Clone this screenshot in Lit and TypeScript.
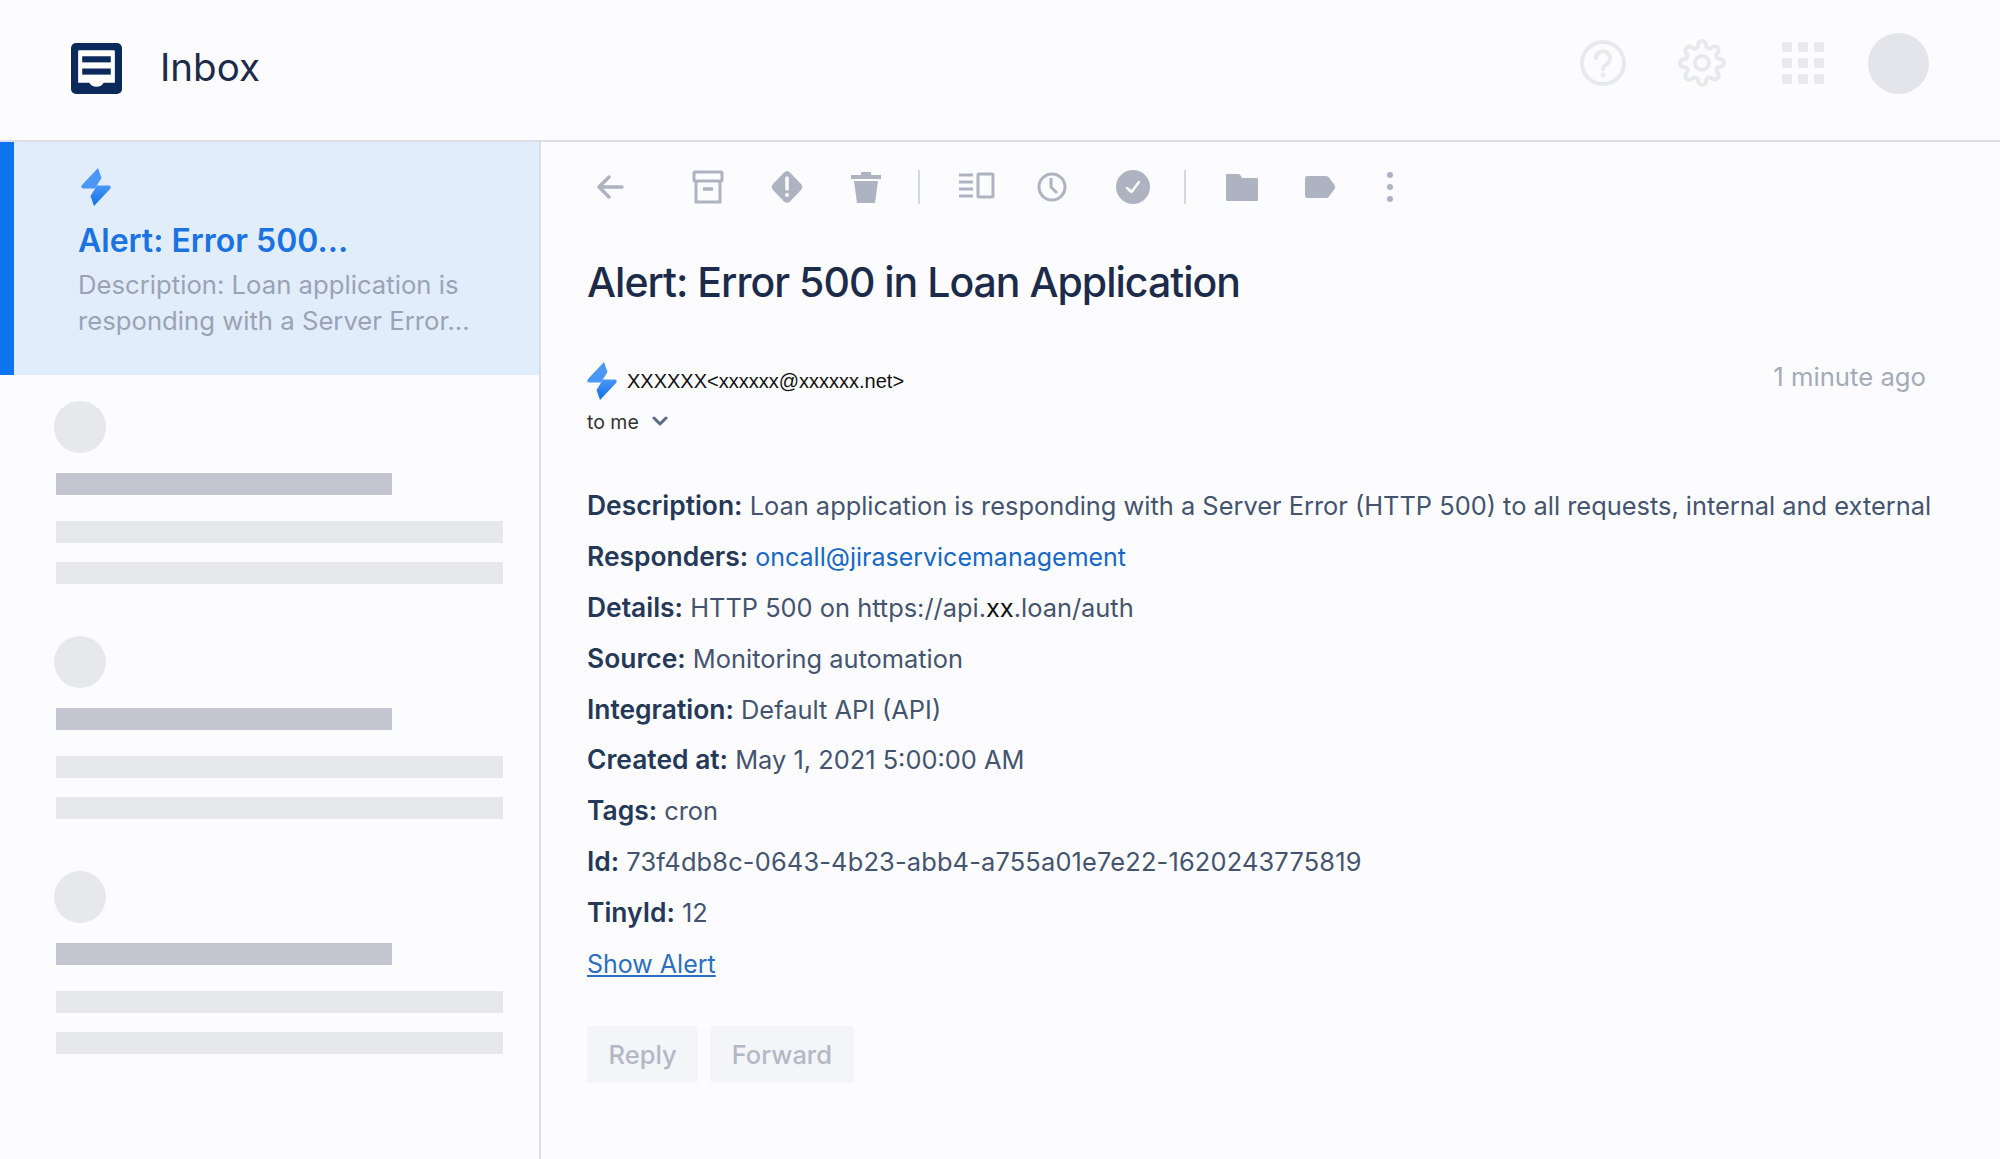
import { LitElement, css, html, svg } from 'lit'
import { customElement } from 'lit/decorators.js'

const bolt = (id: string) => svg`
  <defs>
    <linearGradient id=${id} x1="0" y1="0" x2="0" y2="1">
      <stop offset="0" stop-color="#4a97f5" />
      <stop offset="1" stop-color="#0f6fe6" />
    </linearGradient>
  </defs>
  <path fill="#4a97f5" d="M17 0 L1 17 Q-1 20.500 2.500 20.500 H14 L20.500 10 Z" />
  <path fill=${`url(#${id})`} d="M13 38 L29 21 Q31 17.500 27.500 17.500 H16 L9.500 28 Z" />
`

const skeletons = [0, 1, 2]

const details: [string, string][] = [
  ['Source:', 'Monitoring automation'],
  ['Integration:', 'Default API (API)'],
  ['Created at:', 'May 1, 2021 5:00:00 AM'],
  ['Tags:', 'cron'],
]

@customElement('app-root')
export class AppRoot extends LitElement {
  render() {
    return html`
      <div class="page">
        <header class="top">
          <svg class="logo" viewBox="0 0 50 50">
            <rect width="50" height="50" rx="5" fill="#0b2a5b" />
            <path fill="#fff" d="M7 8 a1 1 0 0 1 1-1 H42 a1 1 0 0 1 1 1 V39 H32 Q30 43 25 43 Q20 43 18 39 H7 Z" />
            <rect x="11" y="13" width="28" height="6" fill="#0b2a5b" />
            <rect x="11" y="25" width="28" height="6" fill="#0b2a5b" />
          </svg>
          <h1 class="inbox">Inbox</h1>
          <div class="top-right">
            <svg class="help" viewBox="0 0 46 46" fill="none" stroke="currentColor" stroke-width="4">
              <circle cx="23" cy="23" r="21" />
              <path stroke-linecap="round" d="M16 18 a7 7 0 1 1 11 6 q-4 2 -4 5" />
              <circle cx="23" cy="35" r="1.500" fill="currentColor" stroke-width="2" />
            </svg>
            <svg class="gear" viewBox="0 0 24 24" fill="none" stroke="currentColor" stroke-width="2">
              <circle cx="12" cy="12" r="3.500" />
              <path d="M19.400 15a1.650 1.650 0 0 0 .33 1.820l.06.06a2 2 0 0 1 0 2.830 2 2 0 0 1-2.830 0l-.06-.06a1.650 1.650 0 0 0-1.820-.33 1.650 1.650 0 0 0-1 1.510V21a2 2 0 0 1-2 2 2 2 0 0 1-2-2v-.09A1.650 1.650 0 0 0 9 19.400a1.650 1.650 0 0 0-1.820.33l-.06.06a2 2 0 0 1-2.830 0 2 2 0 0 1 0-2.830l.06-.06a1.650 1.650 0 0 0 .33-1.820 1.650 1.650 0 0 0-1.510-1H3a2 2 0 0 1-2-2 2 2 0 0 1 2-2h.09A1.650 1.650 0 0 0 4.600 9a1.650 1.650 0 0 0-.33-1.820l-.06-.06a2 2 0 0 1 0-2.830 2 2 0 0 1 2.830 0l.06.06a1.650 1.650 0 0 0 1.820.33H9a1.650 1.650 0 0 0 1-1.510V3a2 2 0 0 1 2-2 2 2 0 0 1 2 2v.09a1.650 1.650 0 0 0 1 1.510 1.650 1.650 0 0 0 1.820-.33l.06-.06a2 2 0 0 1 2.830 0 2 2 0 0 1 0 2.830l-.06.06a1.650 1.650 0 0 0-.33 1.820V9a1.650 1.650 0 0 0 1.510 1H21a2 2 0 0 1 2 2 2 2 0 0 1-2 2h-.09a1.650 1.650 0 0 0-1.510 1z" />
            </svg>
            <div class="apps">
              ${Array.from({ length: 9 }, () => html`<span></span>`)}
            </div>
            <div class="avatar"></div>
          </div>
        </header>

        <div class="main">
          <aside class="side">
            <div class="selected">
              <svg class="bolt" viewBox="0 0 30 38">${bolt('bolt-a')}</svg>
              <div class="sel-title">Alert: Error 500...</div>
              <div class="sel-desc">Description: Loan application is<br />responding with a Server Error...</div>
            </div>
            ${skeletons.map(
              () => html`
                <div class="skel">
                  <div class="skel-dot"></div>
                  <div class="skel-bar dark"></div>
                  <div class="skel-bar"></div>
                  <div class="skel-bar"></div>
                </div>
              `,
            )}
          </aside>

          <section class="mail">
            <div class="tools">
              <svg class="t back" viewBox="0 0 40 40" fill="none" stroke="currentColor" stroke-width="3.500" stroke-linecap="round" stroke-linejoin="round">
                <path d="M9 20 H32 M19 10 L9 20 L19 30" />
              </svg>
              <svg class="t archive" viewBox="0 0 40 40" fill="none" stroke="currentColor" stroke-width="3">
                <rect x="6" y="5" width="28" height="9" rx="1" />
                <path d="M8 14 V35 H32 V14" />
                <path d="M15 22 H25" stroke-width="3.500" />
              </svg>
              <svg class="t flag" viewBox="0 0 40 40">
                <path fill="currentColor" d="M20 4 Q21.500 4 23 5.500 L34 17 Q36.500 20 34 23 L23 34.500 Q20 37 17 34.500 L6 23 Q3.500 20 6 17 L17 5.500 Q18.500 4 20 4 Z" />
                <path stroke="#fcfcfe" stroke-width="3.500" stroke-linecap="round" d="M20 11 V22" />
                <circle cx="20" cy="28" r="2" fill="#fcfcfe" />
              </svg>
              <svg class="t trash" viewBox="0 0 40 40" fill="currentColor">
                <path d="M15 5 H25 V8 H35 V12 H5 V8 H15 Z" />
                <path d="M8 14 H32 L29 36 H11 Z" />
              </svg>
              <i class="sep s1"></i>
              <svg class="t panel" viewBox="0 0 40 40" fill="none" stroke="currentColor" stroke-width="3">
                <path d="M3 8 H17 M3 15 H17 M3 22 H17 M3 29 H17" />
                <rect x="22" y="7" width="15" height="23" rx="1" />
              </svg>
              <svg class="t clock" viewBox="0 0 40 40" fill="none" stroke="currentColor" stroke-width="3">
                <circle cx="20" cy="20" r="13" />
                <path d="M19 11 V20 L25 26" />
              </svg>
              <svg class="t check" viewBox="0 0 40 40">
                <circle cx="20" cy="20" r="17" fill="currentColor" />
                <path d="M14 21 L18.500 25 L26 15" fill="none" stroke="#fcfcfe" stroke-width="2.500" stroke-linecap="round" stroke-linejoin="round" />
              </svg>
              <i class="sep s2"></i>
              <svg class="t folder" viewBox="0 0 40 40" fill="currentColor">
                <path d="M4 7 H16 Q18 7 19 9 L20 11 H35 Q36 11 36 12 V33 Q36 34 35 34 H5 Q4 34 4 33 Z" />
              </svg>
              <svg class="t tag" viewBox="0 0 40 40" fill="currentColor">
                <path d="M7 9 H26 Q28 9 29 10.500 L34.500 18 Q36 20 34.500 22 L29 29.500 Q28 31 26 31 H7 Q5 31 5 28 V12 Q5 9 7 9 Z" />
              </svg>
              <svg class="t kebab" viewBox="0 0 40 40" fill="currentColor">
                <circle cx="20" cy="8" r="3" />
                <circle cx="20" cy="20" r="3" />
                <circle cx="20" cy="32" r="3" />
              </svg>
            </div>

            <h2 class="subject">Alert: Error 500 in Loan Application</h2>

            <div class="from">
              <div class="from-left">
                <div class="sender">
                  <svg class="bolt-sm" viewBox="0 0 30 38">${bolt('bolt-b')}</svg>
                  <span>XXXXXX&lt;xxxxxx@xxxxxx.net&gt;</span>
                </div>
                <div class="to">
                  to me
                  <svg class="chev" viewBox="0 0 16 10" fill="none" stroke="#5a6b85" stroke-width="3" stroke-linecap="round" stroke-linejoin="round">
                    <path d="M2 2 L8 8 L14 2" />
                  </svg>
                </div>
              </div>
              <div class="when">1 minute ago</div>
            </div>

            <div class="body">
              <p><b>Description:</b> Loan application is responding with a Server Error (HTTP 500) to all requests, internal and external</p>
              <p><b>Responders:</b> <a class="plain">oncall@jiraservicemanagement</a></p>
              <p><b>Details:</b> HTTP 500 on https://api.<span class="dark-x">xx</span>.loan/auth</p>
              ${details.map(([k, v]) => html`<p><b>${k}</b> ${v}</p>`)}
              <p><b>Id:</b> <span class="uuid">73f4db8c-0643-4b23-abb4-a755a01e7e22-1620243775819</span></p>
              <p><b>TinyId:</b> 12</p>
              <p><a class="under">Show Alert</a></p>
            </div>

            <div class="actions">
              <button>Reply</button>
              <button>Forward</button>
            </div>
          </section>
        </div>
      </div>
    `
  }

  static styles = css`
    :host {
      display: block;
      font-family: Inter, 'Liberation Sans', sans-serif;
    }
    .page {
      width: 2000px;
      height: 1159px;
      overflow: hidden;
      background: #fcfcfe;
      display: flex;
      flex-direction: column;
    }
    .top {
      height: 140px;
      flex: none;
      border-bottom: 2px solid #dcdee6;
      display: flex;
      align-items: center;
      padding: 0 71px 0 71px;
    }
    .logo {
      width: 51px;
      height: 51px;
      margin-top: -4px;
    }
    .inbox {
      margin: -6px 0 0 38px;
      font-size: 38.500px;
      font-weight: 400;
      color: #1c2b4a;
    }
    .top-right {
      margin-left: auto;
      display: flex;
      align-items: center;
      color: #e8e9ed;
      margin-top: -14px;
    }
    .help {
      width: 46px;
      height: 46px;
    }
    .gear {
      width: 48px;
      height: 48px;
      margin-left: 52px;
    }
    .apps {
      width: 42px;
      margin-left: 56px;
      display: grid;
      grid-template-columns: repeat(3, 10px);
      gap: 6px;
    }
    .apps span {
      height: 10px;
      background: #e8e9ed;
      border-radius: 2px;
    }
    .avatar {
      width: 61px;
      height: 61px;
      margin-left: 44px;
      border-radius: 50%;
      background: #e4e5ea;
    }
    .main {
      flex: 1;
      display: flex;
      min-height: 0;
    }
    .side {
      width: 539px;
      flex: none;
      border-right: 2px solid #dcdee6;
    }
    .selected {
      height: 233px;
      box-sizing: border-box;
      background: #e2edfc;
      border-left: 14px solid #0d74f0;
      padding: 26px 0 0 64px;
    }
    .bolt {
      display: block;
      width: 30px;
      height: 38px;
      margin-left: 3px;
    }
    .sel-title {
      margin-top: 15px;
      font-size: 32px;
      line-height: 40px;
      font-weight: 600;
      color: #1a73e0;
    }
    .sel-desc {
      margin-top: 6px;
      font-size: 25.700px;
      line-height: 36px;
      color: #9aa3b5;
    }
    .skel {
      height: 235px;
      box-sizing: border-box;
      padding: 26px 36px 0 56px;
    }
    .skel-dot {
      width: 52px;
      height: 52px;
      margin-left: -2px;
      border-radius: 50%;
      background: #e7e8eb;
    }
    .skel-bar {
      height: 22px;
      margin-top: 19px;
      background: #e7e8eb;
    }
    .skel-dot + .skel-bar {
      margin-top: 20px;
    }
    .skel-bar + .skel-bar {
      margin-top: 26px;
    }
    .skel-bar + .skel-bar + .skel-bar {
      margin-top: 19px;
    }
    .skel-bar.dark {
      width: 336px;
      background: #c3c6d1;
    }
    .mail {
      flex: 1;
      padding: 25px 0 0 46px;
      min-width: 0;
    }
    .tools {
      display: flex;
      align-items: center;
      height: 40px;
      color: #aeb3c1;
    }
    .t {
      width: 40px;
      height: 40px;
      flex: none;
    }
    .back {
      margin-left: 3px;
    }
    .archive {
      margin-left: 58px;
    }
    .flag,
    .trash {
      margin-left: 39px;
    }
    .sep {
      width: 2px;
      height: 34px;
      background: #d5d7df;
      flex: none;
    }
    .s1 {
      margin-left: 32px;
    }
    .panel {
      margin-left: 36px;
    }
    .clock {
      margin-left: 36px;
    }
    .check {
      margin-left: 41px;
    }
    .s2 {
      margin-left: 31px;
    }
    .folder {
      margin-left: 36px;
    }
    .tag {
      margin-left: 38px;
    }
    .kebab {
      margin-left: 30px;
    }
    .subject {
      margin: 51px 0 0;
      font-size: 41px;
      line-height: 48px;
      font-weight: 500;
      letter-spacing: -1px;
      color: #1c2b4a;
    }
    .from {
      margin-top: 56px;
      display: flex;
      justify-content: space-between;
      align-items: flex-start;
      padding-right: 74px;
    }
    .sender {
      display: flex;
      align-items: center;
      gap: 10px;
      font-family: 'Liberation Sans', sans-serif;
      font-size: 20px;
      color: #111;
    }
    .bolt-sm {
      width: 30px;
      height: 38px;
    }
    .to {
      margin-top: 9px;
      display: flex;
      align-items: center;
      gap: 13px;
      font-size: 19.500px;
      line-height: 26px;
      color: #333;
    }
    .chev {
      width: 16px;
      height: 10px;
      margin-top: -3px;
    }
    .when {
      font-size: 25.700px;
      line-height: 30px;
      color: #a5abb8;
    }
    .body {
      margin-top: 46px;
      font-size: 25.400px;
      color: #44546f;
    }
    .body p {
      margin: 0;
      height: 50.900px;
      line-height: 50.900px;
      white-space: nowrap;
    }
    .body b {
      font-size: 26.400px;
      line-height: 1;
      font-weight: 600;
      color: #253858;
    }
    .plain {
      font-size: 25px;
      color: #1668c7;
    }
    .under {
      font-size: 25px;
      color: #2a6fc0;
      text-decoration: underline;
    }
    .dark-x {
      color: #111;
    }
    .uuid {
      letter-spacing: 0.170px;
    }
    .actions {
      margin-top: 36px;
      display: flex;
      gap: 12px;
    }
    button {
      height: 57px;
      padding: 0 21.500px;
      border: none;
      border-radius: 3px;
      background: #f4f5f8;
      color: #b3b8c6;
      font: 500 25.500px Inter, 'Liberation Sans', sans-serif;
    }
  `
}
